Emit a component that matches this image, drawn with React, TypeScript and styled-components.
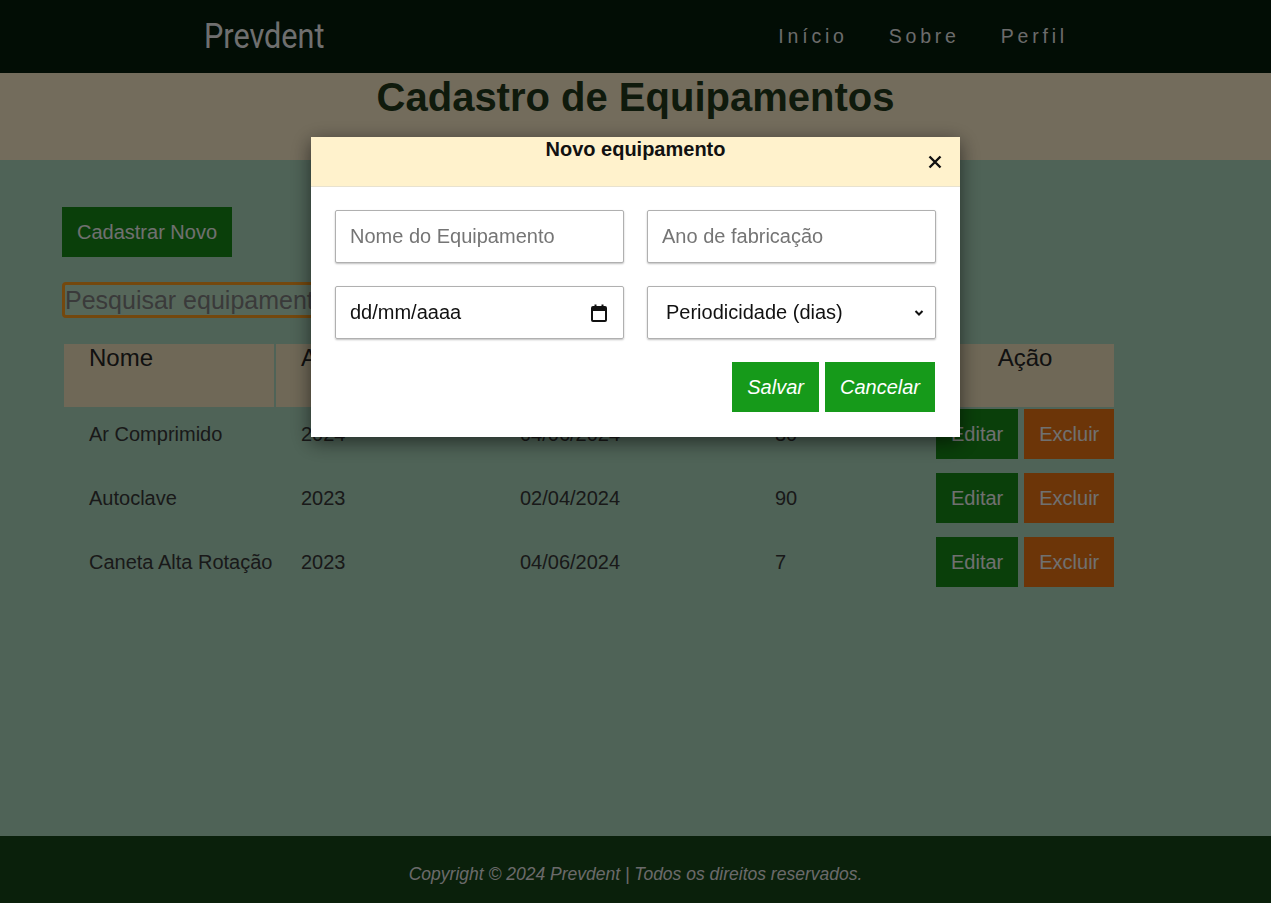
import styled, { createGlobalStyle } from "styled-components";

const GlobalStyle = createGlobalStyle`
  * { box-sizing: border-box; }
  html, body { margin: 0; padding: 0; }
  body {
    font-family: "Liberation Sans", Arial, sans-serif;
    color: #333;
  }
`;

const Page = styled.div`
  min-height: 100vh;
  display: flex;
  flex-direction: column;
`;

const TopBar = styled.header`
  height: 73px;
  background: #041a0a;
  display: flex;
  align-items: center;
  justify-content: space-between;
  padding: 0 203px 0 204px;
`;

const Brand = styled.span`
  display: inline-block;
  font-family: Roboto, "Liberation Sans", sans-serif;
  font-size: 35px;
  color: #dedede;
  transform: scaleX(0.875);
  transform-origin: left center;
`;

const Nav = styled.nav`
  display: flex;
  gap: 41px;
`;

const NavLink = styled.a`
  font-size: 19.5px;
  letter-spacing: 3.8px;
  color: #d6d6d6;
  text-decoration: none;
`;

const Hero = styled.section`
  height: 87px;
  padding-top: 2px;
  background: #e6d8b8;
`;

const Title = styled.h1`
  margin: 0;
  font-size: 40px;
  font-weight: bold;
  text-align: center;
  color: #1e3418;
`;

const Main = styled.main`
  flex: 1;
  background: #9ec6ae;
  padding: 47px 0 0 62px;
  display: flex;
  flex-direction: column;
  align-items: flex-start;
`;

const ActionButton = styled.button<{ $tone: "green" | "orange" }>`
  height: 50px;
  padding: 0 15px;
  border: none;
  background: ${(p) => (p.$tone === "green" ? "#147e14" : "#d86a10")};
  color: #e0e0e0;
  font-family: "Liberation Sans", Arial, sans-serif;
  font-size: 20px;
  cursor: pointer;
`;

const SearchInput = styled.input`
  margin-top: 25px;
  width: 420px;
  height: 36px;
  padding: 0;
  border: 3px solid #e8901c;
  border-radius: 4px;
  background: #adcfb5;
  font-family: "Liberation Sans", Arial, sans-serif;
  font-size: 25px;
  color: #333;
  &::placeholder { color: #757575; }
`;

const Table = styled.table`
  margin-top: 24px;
  width: 1054px;
  table-layout: fixed;
  border-spacing: 2px;
`;

const Th = styled.th<{ $center?: boolean }>`
  height: 63px;
  background: #ded0ae;
  font-size: 24px;
  font-weight: normal;
  color: #222;
  text-align: ${(p) => (p.$center ? "center" : "left")};
  vertical-align: top;
  padding: 0 ${(p) => (p.$center ? "0" : "25px")};
  white-space: nowrap;
  overflow: hidden;
`;

const Td = styled.td<{ $actions?: boolean }>`
  height: 62px;
  padding: 0 ${(p) => (p.$actions ? "0" : "25px")} 12px;
  font-size: 20px;
  color: #333;
  vertical-align: middle;
  white-space: nowrap;
`;

const Actions = styled.div`
  display: flex;
  gap: 6px;
`;

const Footer = styled.footer`
  height: 67px;
  background: #144016;
  padding-top: 28px;
  text-align: center;
  font-style: italic;
  font-size: 17.5px;
  line-height: 20px;
  color: #d4d4d4;
`;

const Overlay = styled.div`
  position: fixed;
  inset: 0;
  background: rgba(0, 0, 0, 0.5);
`;

const Modal = styled.div`
  width: 649px;
  margin: 137px auto 0;
  background: #fff;
  box-shadow: 0 5px 18px rgba(0, 0, 0, 0.55);
`;

const ModalHeader = styled.div`
  position: relative;
  height: 50px;
  background: #fff2cc;
  border-bottom: 1px solid #e8e2cf;
  padding-top: 1px;
`;

const ModalTitle = styled.h2`
  margin: 0;
  text-align: center;
  font-size: 20px;
  font-weight: bold;
  color: #111;
`;

const CloseButton = styled.button`
  position: absolute;
  right: 17px;
  top: 17px;
  width: 16px;
  height: 16px;
  padding: 0;
  border: none;
  background: none;
  display: flex;
  align-items: center;
  justify-content: center;
  cursor: pointer;
`;

const ModalBody = styled.div`
  padding: 23px 24px 25px 24px;
`;

const FieldGrid = styled.div`
  display: grid;
  grid-template-columns: minmax(0, 1fr) minmax(0, 1fr);
  gap: 23px;
`;

const Field = styled.input`
  width: 100%;
  min-width: 0;
  height: 53px;
  padding: 0 14px;
  border: 1px solid #b0b0b0;
  border-radius: 2px;
  box-shadow: 0 1px 2px rgba(0, 0, 0, 0.25);
  font-family: "Liberation Sans", Arial, sans-serif;
  font-size: 20px;
  color: #111;
  &::placeholder { color: #757575; }
`;

const FakeField = styled.div`
  height: 53px;
  padding: 0 16px 0 14px;
  border: 1px solid #b0b0b0;
  border-radius: 2px;
  box-shadow: 0 1px 2px rgba(0, 0, 0, 0.25);
  display: flex;
  align-items: center;
  justify-content: space-between;
  font-size: 20px;
  color: #111;
`;

const Select = styled.div`
  height: 53px;
  padding: 0 11px 0 18px;
  border: 1px solid #b0b0b0;
  border-radius: 2px;
  box-shadow: 0 1px 2px rgba(0, 0, 0, 0.25);
  display: flex;
  align-items: center;
  justify-content: space-between;
  font-size: 20px;
  color: #111;
`;

const ButtonRow = styled.div`
  margin-top: 23px;
  padding-right: 1px;
  display: flex;
  justify-content: flex-end;
  gap: 6px;
`;

const ModalButton = styled.button`
  height: 50px;
  padding: 0 15px;
  border: none;
  background: #169a1a;
  color: #fff;
  font-family: "Liberation Sans", Arial, sans-serif;
  font-style: italic;
  font-size: 20px;
  cursor: pointer;
`;

const rows = [
  { nome: "Ar Comprimido", ano: "2024", data: "04/06/2024", per: "30" },
  { nome: "Autoclave", ano: "2023", data: "02/04/2024", per: "90" },
  { nome: "Caneta Alta Rotação", ano: "2023", data: "04/06/2024", per: "7" },
];

export default function App() {
  return (
    <>
      <GlobalStyle />
      <Page>
        <TopBar>
          <Brand>Prevdent</Brand>
          <Nav>
            <NavLink>Início</NavLink>
            <NavLink>Sobre</NavLink>
            <NavLink>Perfil</NavLink>
          </Nav>
        </TopBar>
        <Hero>
          <Title>Cadastro de Equipamentos</Title>
        </Hero>
        <Main>
          <ActionButton $tone="green">Cadastrar Novo</ActionButton>
          <SearchInput placeholder="Pesquisar equipamento" />
          <Table>
            <colgroup>
              <col style={{ width: 210 }} />
              <col style={{ width: 217 }} />
              <col style={{ width: 253 }} />
              <col style={{ width: 184 }} />
              <col style={{ width: 178 }} />
            </colgroup>
            <thead>
              <tr>
                <Th>Nome</Th>
                <Th>Ano</Th>
                <Th>Última Manutenção</Th>
                <Th>Periodicidade</Th>
                <Th $center>Ação</Th>
              </tr>
            </thead>
            <tbody>
              {rows.map((r) => (
                <tr key={r.nome}>
                  <Td>{r.nome}</Td>
                  <Td>{r.ano}</Td>
                  <Td>{r.data}</Td>
                  <Td>{r.per}</Td>
                  <Td $actions>
                    <Actions>
                      <ActionButton $tone="green">Editar</ActionButton>
                      <ActionButton $tone="orange">Excluir</ActionButton>
                    </Actions>
                  </Td>
                </tr>
              ))}
            </tbody>
          </Table>
        </Main>
        <Footer>Copyright © 2024 Prevdent | Todos os direitos reservados.</Footer>
      </Page>
      <Overlay>
        <Modal>
          <ModalHeader>
            <ModalTitle>Novo equipamento</ModalTitle>
            <CloseButton>
              <svg width="14" height="14" viewBox="0 0 14 14">
                <path d="M1.5 1.5 L12.5 12.5 M12.5 1.5 L1.5 12.5" stroke="#111" strokeWidth="2.4" />
              </svg>
            </CloseButton>
          </ModalHeader>
          <ModalBody>
            <FieldGrid>
              <Field placeholder="Nome do Equipamento" />
              <Field placeholder="Ano de fabricação" />
              <FakeField>
                <span>dd/mm/aaaa</span>
                <svg width="16" height="18" viewBox="0 0 16 18">
                  <rect x="1" y="3" width="14" height="14" rx="1" fill="none" stroke="#111" strokeWidth="2" />
                  <rect x="1" y="3" width="14" height="4" fill="#111" />
                  <rect x="3.5" y="0.5" width="2" height="4" fill="#111" />
                  <rect x="10.5" y="0.5" width="2" height="4" fill="#111" />
                </svg>
              </FakeField>
              <Select>
                <span>Periodicidade (dias)</span>
                <svg width="10" height="8" viewBox="0 0 10 8">
                  <path d="M1.5 2 L5 5.5 L8.5 2" fill="none" stroke="#111" strokeWidth="2" />
                </svg>
              </Select>
            </FieldGrid>
            <ButtonRow>
              <ModalButton>Salvar</ModalButton>
              <ModalButton>Cancelar</ModalButton>
            </ButtonRow>
          </ModalBody>
        </Modal>
      </Overlay>
    </>
  );
}
